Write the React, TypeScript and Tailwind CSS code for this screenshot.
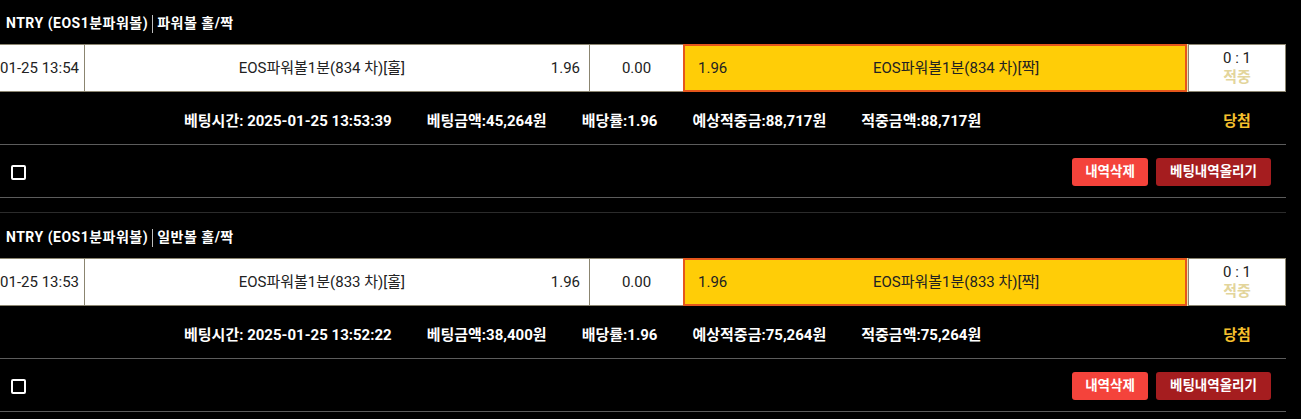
import React from 'react';

interface Bet {
  game: string;
  market: string;
  placedAt: string;
  round: number;
  homePick: string;
  awayPick: string;
  homeOdds: string;
  drawOdds: string;
  awayOdds: string;
  score: string;
  betTime: string;
  stake: string;
  odds: string;
  expected: string;
  payout: string;
}

const bets: Bet[] = [
  {
    game: 'NTRY (EOS1분파워볼)',
    market: '파워볼 홀/짝',
    placedAt: '01-25 13:54',
    round: 834,
    homePick: '홀',
    awayPick: '짝',
    homeOdds: '1.96',
    drawOdds: '0.00',
    awayOdds: '1.96',
    score: '0 : 1',
    betTime: '2025-01-25 13:53:39',
    stake: '45,264',
    odds: '1.96',
    expected: '88,717',
    payout: '88,717',
  },
  {
    game: 'NTRY (EOS1분파워볼)',
    market: '일반볼 홀/짝',
    placedAt: '01-25 13:53',
    round: 833,
    homePick: '홀',
    awayPick: '짝',
    homeOdds: '1.96',
    drawOdds: '0.00',
    awayOdds: '1.96',
    score: '0 : 1',
    betTime: '2025-01-25 13:52:22',
    stake: '38,400',
    odds: '1.96',
    expected: '75,264',
    payout: '75,264',
  },
];

function BetCard({ bet }: { bet: Bet }) {
  return (
    <div className="flex flex-col">
      {/* Game title */}
      <div className="h-[45px] pt-[4px] pl-[6px] flex items-center text-[14px] tracking-[0.5px] font-bold text-white">
        <span>{bet.game}</span>
        <span className="mx-[4px] w-px h-[18px] bg-[#bdbdbd]" />
        <span>{bet.market}</span>
      </div>

      {/* Pick row */}
      <div className="flex h-[48px] text-[15px] text-[#222]">
        <div className="w-[85px] shrink-0 bg-white border-y border-r border-[#8b8570] flex items-center justify-end pr-[5px]">
          <span className="whitespace-nowrap">{bet.placedAt}</span>
        </div>
        <div className="w-[505px] shrink-0 bg-white border-y border-r border-[#8b8570] flex items-center">
          <span className="flex-1 text-center pl-[8px]">
            EOS파워볼1분({bet.round} 차)[{bet.homePick}]
          </span>
          <span className="pr-[9px]">{bet.homeOdds}</span>
        </div>
        <div className="w-[93px] shrink-0 bg-white border-y border-[#8b8570] flex items-center justify-center">
          {bet.drawOdds}
        </div>
        <div className="w-[504px] shrink-0 bg-[#ffcd07] border-2 border-[#e5561b] flex items-center pl-[13px]">
          <span>{bet.awayOdds}</span>
          <span className="flex-1 text-center">
            EOS파워볼1분({bet.round} 차)[{bet.awayPick}]
          </span>
        </div>
        <div className="w-px shrink-0 bg-[#e9dfa6]" />
        <div className="w-[98px] shrink-0 bg-white border border-[#8b8570] flex flex-col items-center justify-center leading-[19px]">
          <span>{bet.score}</span>
          <span className="font-bold text-[#e3d59b]">적중</span>
        </div>
      </div>

      {/* Bet summary */}
      <div className="h-[52px] pt-[6px] flex items-center text-[15px] font-bold text-white">
        <div className="flex-1 flex gap-[35px] pl-[184px]">
          <span>베팅시간: {bet.betTime}</span>
          <span>베팅금액:{bet.stake}원</span>
          <span>배당률:{bet.odds}</span>
          <span>예상적중금:{bet.expected}원</span>
          <span>적중금액:{bet.payout}원</span>
        </div>
        <span className="w-[98px] text-center text-[#f6c02d]">당첨</span>
      </div>
      <div className="h-px bg-[#5c5c5c]" />

      {/* Actions */}
      <div className="h-[52px] flex items-center pl-[11px] pr-[15px]">
        <span className="w-[15px] h-[15px] border-2 border-white rounded-[2px] mt-[2px]" />
        <div className="ml-auto flex gap-[8px] mt-[1px]">
          <button className="h-[28px] w-[76px] rounded-[3px] bg-[#f4433b] text-white text-[13.5px] font-bold">
            내역삭제
          </button>
          <button className="h-[28px] w-[115px] rounded-[3px] bg-[#a51d1f] text-white text-[13.5px] font-bold">
            베팅내역올리기
          </button>
        </div>
      </div>
      <div className="h-px bg-[#5c5c5c]" />
      <div className="h-[14px]" />
      <div className="h-px bg-[#2b2b2b]" />
    </div>
  );
}

export default function App() {
  return (
    <div
      className="min-h-screen bg-black overflow-hidden"
      style={{ fontFamily: "Roboto, 'Noto Sans CJK KR', sans-serif" }}
    >
      <div className="w-[1286px] -mt-px">
        {bets.map((b) => (
          <BetCard key={b.round} bet={b} />
        ))}
      </div>
    </div>
  );
}
